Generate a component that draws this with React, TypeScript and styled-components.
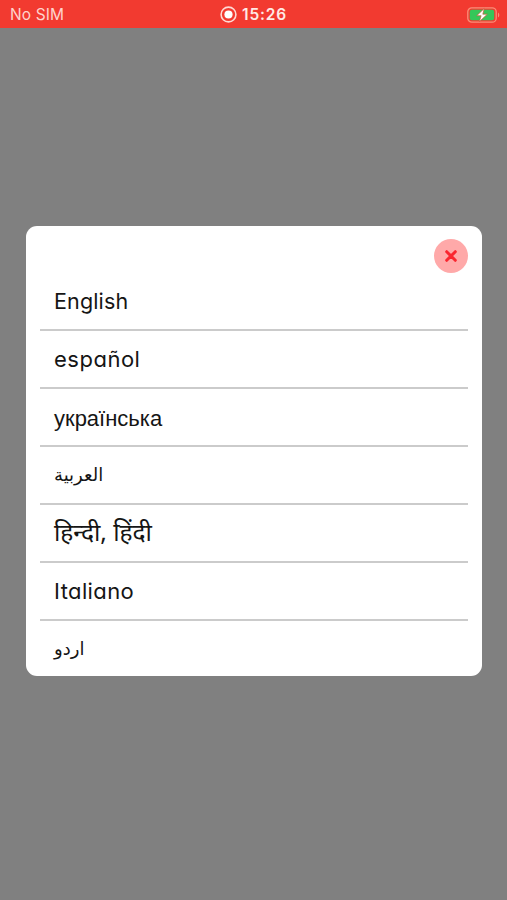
import React from "react";
import styled, { createGlobalStyle } from "styled-components";

const GlobalStyle = createGlobalStyle`
  * { box-sizing: border-box; }
  html, body { margin: 0; background: #808080; }
`;

const Screen = styled.div`
  width: 100%;
  height: 900px;
  display: flex;
  flex-direction: column;
  background: #808080;
  overflow: hidden;
  font-family: Inter, sans-serif;
`;

const StatusBar = styled.header`
  height: 28px;
  flex: none;
  display: grid;
  grid-template-columns: 1fr auto 1fr;
  align-items: center;
  padding: 1px 7px 0 10px;
  background: #f23a30;
  color: #ffe9e5;
`;

const Carrier = styled.span`
  font-size: 15.5px;
  line-height: 20px;
  letter-spacing: 0.1px;
  color: #ffd3cc;
`;

const Clock = styled.div`
  display: flex;
  align-items: center;
  gap: 5px;
  margin-right: 3px;
  font-size: 15.5px;
  line-height: 20px;
  font-weight: 600;
  letter-spacing: 0.8px;
`;

const BatterySlot = styled.div`
  display: flex;
  justify-content: flex-end;
`;

const Sheet = styled.main`
  width: 456px;
  height: 450px;
  margin: 198px 0 0 26px;
  padding: 13px 14px 0;
  display: flex;
  flex-direction: column;
  background: #fff;
  border-radius: 11px;
`;

const CloseButton = styled.button`
  width: 34px;
  height: 34px;
  padding: 0;
  border: 0;
  flex: none;
  align-self: flex-end;
  display: grid;
  place-items: center;
  border-radius: 50%;
  background: #ffa9a9;
`;

const List = styled.ul`
  list-style: none;
  margin: 0;
  padding: 0;
`;

const Row = styled.li`
  height: 58px;
  padding: 0 14px;
  display: flex;
  align-items: center;
  border-bottom: 2px solid #cbcbcb;
  &:last-child { border-bottom: 0; }
`;

const Label = styled.span<{ $family: string; $size: number; $spacing: number; $shift: number }>`
  font-family: ${(p) => p.$family};
  font-size: ${(p) => p.$size}px;
  font-feature-settings: "cv11";
  letter-spacing: ${(p) => p.$spacing}px;
  margin-top: ${(p) => p.$shift}px;
  line-height: 30px;
  white-space: nowrap;
  color: #151515;
`;

const latin = 'Inter, sans-serif';
const languages = [
  { name: "English", lang: "en", family: latin, size: 21.5, spacing: 0.15, shift: 0 },
  { name: "español", lang: "es", family: latin, size: 22, spacing: 0.5, shift: 0 },
  { name: "українська", lang: "uk", family: '"Liberation Sans", sans-serif', size: 22, spacing: 0, shift: 3 },
  { name: "العربية", lang: "ar", family: '"DejaVu Sans", sans-serif', size: 18, spacing: 0, shift: -1 },
  { name: "हिन्दी, हिंदी", lang: "hi", family: '"Noto Sans", sans-serif', size: 24.5, spacing: 0, shift: -3 },
  { name: "Italiano", lang: "it", family: latin, size: 22, spacing: 0.4, shift: 0 },
  { name: "اردو", lang: "ur", family: '"DejaVu Sans", sans-serif', size: 18, spacing: 0, shift: -2 },
];

const RecordIcon = () => (
  <svg width="17" height="17" viewBox="0 0 17 17" fill="none">
    <circle cx="8.5" cy="8.5" r="7.4" stroke="#ffd9d4" strokeWidth="1.6" />
    <circle cx="8.5" cy="8.5" r="4.1" fill="#fff" />
  </svg>
);

const BatteryIcon = () => (
  <svg width="33" height="16" viewBox="0 0 33 16" fill="none">
    <rect x="0.8" y="0.8" width="28.4" height="14.4" rx="4" stroke="#f98f78" strokeWidth="1.3" />
    <rect x="2.8" y="2.8" width="24.4" height="10.4" rx="2" fill="#35c759" />
    <path d="M31 5.5c1.7.7 1.7 4.3 0 5z" fill="#f98f78" />
    <path d="M17.3 1.4 9.7 8.7h4.4l-1.7 5.9 7.9-7.4h-4.5z" fill="#fff" stroke="#c55b3b" strokeWidth="0.7" />
  </svg>
);

export default function App() {
  return (
    <Screen>
      <GlobalStyle />
      <StatusBar>
        <Carrier>No SIM</Carrier>
        <Clock><RecordIcon />15:26</Clock>
        <BatterySlot><BatteryIcon /></BatterySlot>
      </StatusBar>
      <Sheet>
        <CloseButton aria-label="Close">
          <svg width="14" height="14" viewBox="0 0 14 14">
            <path d="M2.7 2.7l8.6 8.6M11.3 2.7l-8.6 8.6" stroke="#fa2630" strokeWidth="3" strokeLinecap="round" />
          </svg>
        </CloseButton>
        <List>
          {languages.map((l) => (
            <Row key={l.lang}>
              <Label lang={l.lang} $family={l.family} $size={l.size} $spacing={l.spacing} $shift={l.shift}>{l.name}</Label>
            </Row>
          ))}
        </List>
      </Sheet>
    </Screen>
  );
}
